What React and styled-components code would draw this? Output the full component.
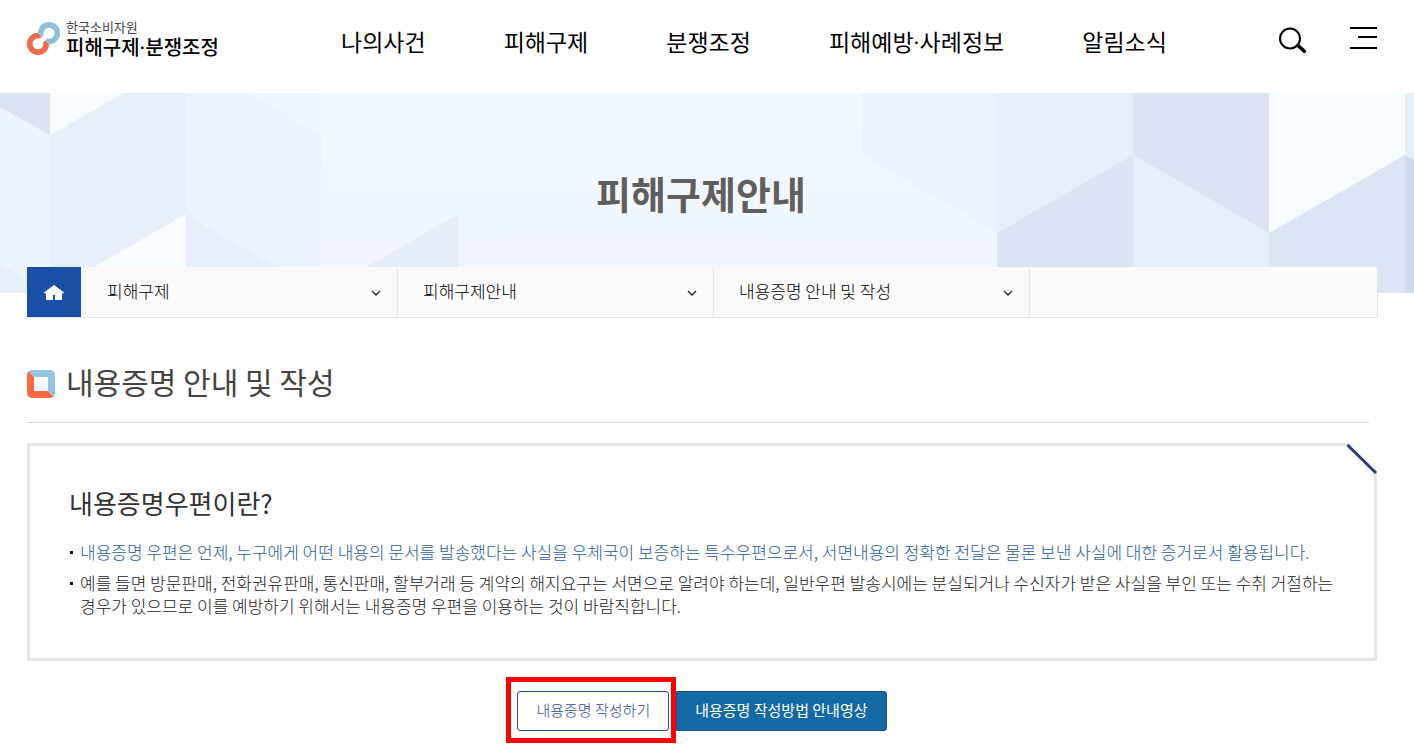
import React from 'react';
import styled, { createGlobalStyle } from 'styled-components';

const menus = ['나의사건', '피해구제', '분쟁조정', '피해예방·사례정보', '알림소식'];

const paths = ['피해구제', '피해구제안내', '내용증명 안내 및 작성'];

const LogoMark = () => (
    <svg width="34" height="34" viewBox="0 0 34 34" fill="none" aria-hidden="true">
        <clipPath id="upper">
            <path d="M0 -1 L34 33 V-1 Z" />
        </clipPath>
        <clipPath id="lower">
            <path d="M0 -1 L34 33 V34 H0 Z" />
        </clipPath>
        <circle cx="12" cy="21.8" r="8.3" stroke="#ee6a48" strokeWidth="5.6" clipPath="url(#lower)" />
        <circle cx="23" cy="11.2" r="8.3" stroke="#8fbfdc" strokeWidth="5.6" clipPath="url(#upper)" />
        <path d="M12 21.8 L23 11.2" stroke="#fff" strokeWidth="5" />
    </svg>
);

const SearchIcon = () => (
    <svg width="28" height="30" viewBox="0 0 28 30" fill="none" stroke="#000" aria-hidden="true">
        <circle cx="11" cy="14.5" r="10" strokeWidth="2" />
        <path d="M19 21.5 L25.3 27.3" strokeWidth="3.6" strokeLinecap="round" />
    </svg>
);

const MenuIcon = () => (
    <svg width="27" height="23" viewBox="0 0 27 23" fill="#000" aria-hidden="true">
        <rect width="27" height="2" y="0" />
        <rect width="19" height="2" x="8" y="9" />
        <rect width="27" height="2" y="20" />
    </svg>
);

const HomeIcon = () => (
    <svg width="20" height="15" viewBox="0 0 20 15" fill="#fff" aria-hidden="true">
        <path d="M10 0 L20 7.5 L19.3 8.6 H18 V15 H11 V10 H9 V15 H2 V8.6 H0.7 L0 7.5 Z" />
    </svg>
);

const SquareIcon = () => (
    <svg width="28" height="28" viewBox="0 0 28 28" aria-hidden="true">
        <clipPath id="square">
            <rect width="28" height="28" rx="5" />
        </clipPath>
        <g clipPath="url(#square)">
            <path d="M0 0 H28 V28 Z" fill="#93c3de" />
            <path d="M0 0 V28 H28 Z" fill="#ff6842" />
            <rect x="7" y="7" width="14" height="14" fill="#fff" />
        </g>
    </svg>
);

const BannerPattern = () => (
    <Pattern viewBox="0 0 1414 200" preserveAspectRatio="xMidYMid slice" aria-hidden="true">
        <defs>
            <linearGradient id="sky" x1="0" y1="0" x2="0" y2="1">
                <stop offset="0" stopColor="#f2f9ff" />
                <stop offset="0.45" stopColor="#f0f7ff" />
                <stop offset="1" stopColor="#f2f6fe" />
            </linearGradient>
        </defs>
        <rect width="1414" height="200" fill="url(#sky)" />
        <path d="M0 0 H51 V200 H0 Z" fill="#ecf4fd" />
        <path d="M0 0 H50 V42 L0 14 Z" fill="#dde2f2" />
        <path d="M0 171 L50 200 H0 Z" fill="#e7eff8" />
        <path d="M50 0 H186 V200 H50 Z" fill="#f7fcff" />
        <path d="M124 0 H186 V121 L50 199 V42 Z" fill="#e8eef9" />
        <path d="M186 0 H321 V200 H186 Z" fill="#ecf3fd" />
        <path d="M248 0 H321 V42 Z" fill="#eff6ff" />
        <path d="M186 122 L321 200 H186 Z" fill="#e7eef9" />
        <path d="M458 121 V200 H321 Z" fill="#e7ecf9" />
        <path d="M862 0 H997 V140 L862 62 Z" fill="#ebf3fd" />
        <path d="M997 0 H1133 V62 L997 140 Z" fill="#e7eff8" />
        <path d="M1133 62 V200 H997 V140 Z" fill="#dde3f3" />
        <path d="M1133 0 H1269 V140 L1133 62 Z" fill="#dde3f3" />
        <path d="M1133 62 L1269 140 V200 H1133 Z" fill="#e7eff8" />
        <path d="M1269 0 H1405 V62 L1269 140 Z" fill="#f7fcff" />
        <path d="M1405 62 V200 H1269 V140 Z" fill="#dde4f3" />
        <path d="M1405 0 H1414 V67 L1405 62 Z" fill="#e7eef8" />
        <path d="M1405 62 L1414 67 V200 H1405 Z" fill="#cfdbed" />
    </Pattern>
);

const App = () => {
    return (
        <>
            <GlobalStyle />
            <Header>
                <Logo href="#home">
                    <LogoMark />
                    <LogoText>
                        <small>한국소비자원</small>
                        <strong>피해구제·분쟁조정</strong>
                    </LogoText>
                </Logo>
                <Nav>
                    {menus.map(menu => (
                        <a key={menu} href="#menu">{menu}</a>
                    ))}
                </Nav>
                <Utils>
                    <IconButton type="button" aria-label="검색"><SearchIcon /></IconButton>
                    <IconButton type="button" aria-label="전체메뉴"><MenuIcon /></IconButton>
                </Utils>
            </Header>

            <Banner>
                <BannerPattern />
                <BannerTitle>피해구제안내</BannerTitle>
            </Banner>

            <Main>
                <Breadcrumb>
                    <HomeLink href="#home" aria-label="홈"><HomeIcon /></HomeLink>
                    {paths.map(path => (
                        <PathItem key={path}>
                            <PathSelect aria-label={path}>
                                <option>{path}</option>
                            </PathSelect>
                            <Chevron width="10" height="6" viewBox="0 0 10 6" aria-hidden="true">
                                <path d="M1 1 L5 5 L9 1" />
                            </Chevron>
                        </PathItem>
                    ))}
                </Breadcrumb>

                <PageHeading>
                    <SquareIcon />
                    <h2>내용증명 안내 및 작성</h2>
                </PageHeading>

                <InfoBox>
                    <Corner width="34" height="34" viewBox="0 0 34 34" aria-hidden="true">
                        <path d="M2 0 H34 V33 Z" fill="#fff" />
                        <path d="M2.5 4 L31 32" stroke="#2b3a7b" strokeWidth="3" />
                    </Corner>
                    <h3>내용증명우편이란?</h3>
                    <InfoList>
                        <InfoItem $color="#1f5c99">
                            내용증명 우편은 언제, 누구에게 어떤 내용의 문서를 발송했다는 사실을 우체국이 보증하는 특수우편으로서, 서면내용의 정확한 전달은 물론 보낸 사실에 대한 증거로서 활용됩니다.
                        </InfoItem>
                        <InfoItem $color="#222">
                            예를 들면 방문판매, 전화권유판매, 통신판매, 할부거래 등 계약의 해지요구는 서면으로 알려야 하는데, 일반우편 발송시에는 분실되거나 수신자가 받은 사실을 부인 또는 수취 거절하는 경우가 있으므로 이를 예방하기 위해서는 내용증명 우편을 이용하는 것이 바람직합니다.
                        </InfoItem>
                    </InfoList>
                </InfoBox>

                <ButtonRow>
                    <Highlight>
                        <WriteButton type="button">내용증명 작성하기</WriteButton>
                    </Highlight>
                    <VideoButton type="button">내용증명 작성방법 안내영상</VideoButton>
                </ButtonRow>
            </Main>
        </>
    );
};

export default App;

// Styled Components
const GlobalStyle = createGlobalStyle`
  * {
    box-sizing: border-box;
  }

  body {
    margin: 0;
    background: #fff;
    color: #333;
    font-family: 'Noto Sans CJK KR', sans-serif;
  }

  a {
    color: inherit;
    text-decoration: none;
  }

  button, select {
    font-family: inherit;
    cursor: pointer;
  }

  h1, h2, h3, ul {
    margin: 0;
    padding: 0;
  }

  svg {
    display: block;
    flex-shrink: 0;
  }
`;

// Roboto comes first here for its narrow middle dot
const Header = styled.header`
  display: flex;
  align-items: center;
  height: 93px;
  padding: 0 37px 16px 26px;
  font-family: Roboto, 'Noto Sans CJK KR', sans-serif;
`;

const Logo = styled.a`
  display: flex;
  align-items: center;
  gap: 6px;
  flex: 0 0 315px;
`;

const LogoText = styled.span`
  display: flex;
  flex-direction: column;

  small {
    font-size: 13px;
    line-height: 18px;
    color: #444;
  }

  strong {
    font-size: 20px;
    line-height: 22px;
    font-weight: 500;
    color: #000;
  }
`;

const Nav = styled.nav`
  display: flex;
  gap: 78px;
  padding-top: 10px;
  font-size: 23px;
  line-height: 32px;
  color: #000;
  white-space: nowrap;
`;

const Utils = styled.div`
  display: flex;
  align-items: center;
  gap: 43px;
  margin-left: auto;
`;

const IconButton = styled.button`
  padding: 0;
  border: none;
  background: none;
`;

const Banner = styled.section`
  position: relative;
  display: flex;
  justify-content: center;
  height: 200px;
  padding: 73px 12px 0 0;
  overflow: hidden;
`;

const Pattern = styled.svg`
  position: absolute;
  inset: 0;
  width: 100%;
  height: 100%;
`;

const BannerTitle = styled.h1`
  position: relative;
  font-size: 38px;
  line-height: 54px;
  font-weight: 700;
  color: #5f5f5f;
  text-shadow: 1px 1px 0 #fff;
`;

const Main = styled.main`
  padding: 0 36px 0 27px;
`;

const Breadcrumb = styled.nav`
  position: relative;
  display: flex;
  height: 51px;
  margin-top: -26px;
  background: #fafafa;
  border: 1px solid #e5e5e5;
  border-width: 0 1px 1px 0;
`;

const HomeLink = styled.a`
  display: flex;
  align-items: center;
  justify-content: center;
  flex: 0 0 55px;
  border-right: 1px solid #eef1f7;
  background: #1a4fa8;
  background-clip: padding-box;
`;

const PathItem = styled.div`
  position: relative;
  flex: 0 1 316px;
  border-right: 1px solid #e5e5e5;
`;

const PathSelect = styled.select`
  width: 100%;
  height: 100%;
  padding: 0 40px 3px 25px;
  border: none;
  appearance: none;
  background: transparent;
  font-size: 17px;
  font-weight: 300;
  color: #000;
`;

const Chevron = styled.svg`
  position: absolute;
  top: 23px;
  right: 16px;
  fill: none;
  stroke: #222;
  stroke-width: 1.3;
  pointer-events: none;
`;

const PageHeading = styled.div`
  display: flex;
  align-items: center;
  gap: 11px;
  margin: 26px 9px 0 0;
  padding: 16px 0 14px;
  border-bottom: 1px solid #ddd;

  h2 {
    padding-bottom: 6px;
    font-size: 30px;
    line-height: 42px;
    font-weight: 400;
    color: #444;
  }
`;

const InfoBox = styled.section`
  position: relative;
  margin: 20px 1px 0 0;
  padding: 37px 40px 41px 39px;
  border: 3px solid #e5e5e5;

  h3 {
    font-size: 26px;
    line-height: 40px;
    font-weight: 400;
    color: #333;
  }
`;

const Corner = styled.svg`
  position: absolute;
  top: -5px;
  right: -5px;
`;

const InfoList = styled.ul`
  display: flex;
  flex-direction: column;
  gap: 8px;
  margin-top: 17px;
  list-style: none;
`;

const InfoItem = styled.li`
  position: relative;
  padding-left: 11px;
  font-size: 17px;
  line-height: 23px;
  font-weight: 300;
  color: ${props => props.$color};
  word-break: keep-all;

  &::before {
    content: '';
    position: absolute;
    top: 11px;
    left: 1px;
    width: 3px;
    height: 3px;
    background: #111;
  }
`;

const ButtonRow = styled.div`
  display: flex;
  align-items: center;
  justify-content: center;
  margin: 16px 0 6px;
  padding-right: 12px;
`;

const Highlight = styled.div`
  padding: 9px 2px 7px 6px;
  border: 5px solid #fe0000;
`;

const ActionButton = styled.button`
  height: 40px;
  padding: 0 18px 3px;
  border: 1px solid #1a4f9c;
  border-radius: 3px;
  font-size: 15px;
  white-space: nowrap;
`;

const WriteButton = styled(ActionButton)`
  display: block;
  background: #fff;
  font-weight: 300;
  color: #2b4a94;
`;

const VideoButton = styled(ActionButton)`
  margin-top: 2px;
  border-radius: 0 3px 3px 0;
  background: #156aa5;
  color: #fff;
`;
